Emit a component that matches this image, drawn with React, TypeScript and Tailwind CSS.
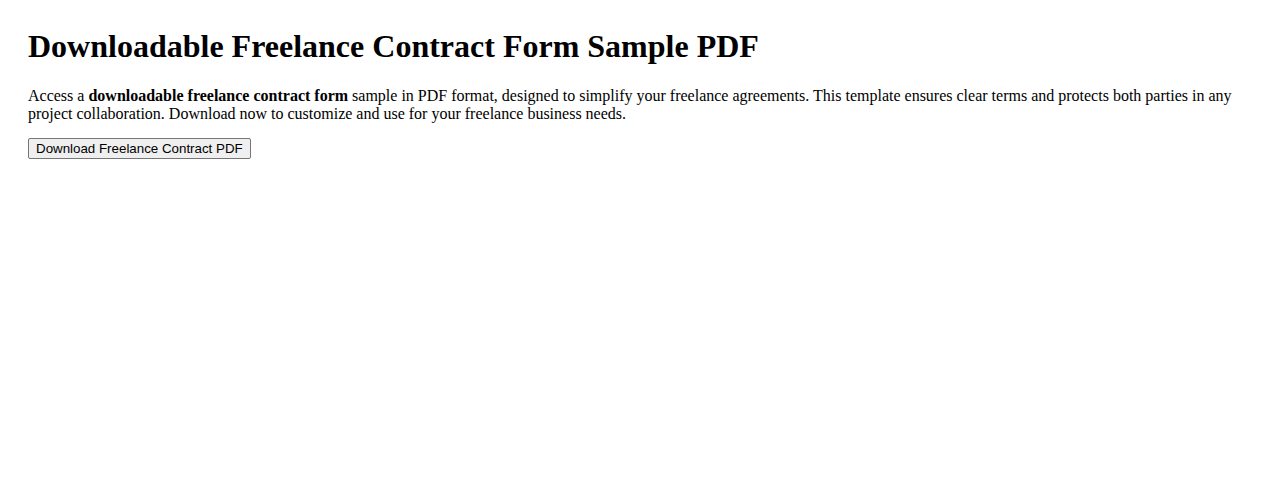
export default function App() {
  return (
    <div className="min-h-screen bg-white px-7 pt-7 font-['Liberation_Serif',serif] text-black">
      <h1 className="m-0 text-[32px] font-bold leading-[normal]">
        Downloadable Freelance Contract Form Sample PDF
      </h1>
      <p className="mt-[22px] mb-[13px] text-base leading-[18px]">
        Access a <strong className="font-bold">downloadable freelance contract form</strong> sample in PDF
        format, designed to simplify your freelance agreements. This template ensures clear terms and
        protects both parties in any project collaboration. Download now to customize and use for your
        freelance business needs.
      </p>
      <button
        type="button"
        className="rounded-[2px] border border-[#767676] bg-[#efefef] px-[7px] py-[2px] font-['Liberation_Sans',Arial,sans-serif] text-[13.333px] leading-[normal] text-black hover:bg-[#e5e5e5]"
      >
        Download Freelance Contract PDF
      </button>
    </div>
  );
}
